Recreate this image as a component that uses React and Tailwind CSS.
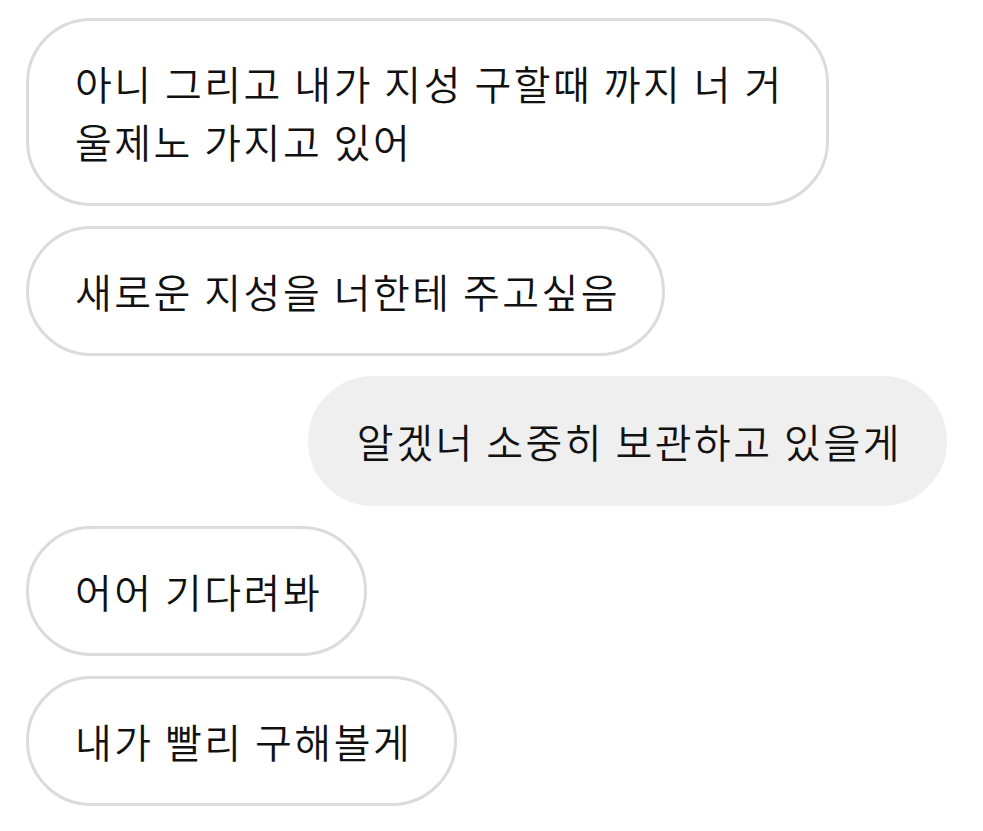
import React from 'react';

const messages = [
  { id: 1, mine: false, text: '아니 그리고 내가 지성 구할때 까지 너 거울제노 가지고 있어' },
  { id: 2, mine: false, text: '새로운 지성을 너한테 주고싶음' },
  { id: 3, mine: true, text: '알겠너 소중히 보관하고 있을게' },
  { id: 4, mine: false, text: '어어 기다려봐' },
  { id: 5, mine: false, text: '내가 빨리 구해볼게' },
];

const Bubble = ({ mine, text }) => (
  <div className={mine ? 'flex justify-end' : 'flex justify-start'}>
    <div
      className={
        mine
          ? 'max-w-[803px] rounded-[65px] bg-[#efefef] border-[3px] border-[#efefef] pl-[46px] pr-[42px] py-[33px] text-[40px] leading-[58px] tracking-[2.5px] font-[350] text-[#111111]'
          : 'max-w-[803px] rounded-[65px] bg-white border-[3px] border-[#dbdbdb] pl-[46px] pr-[42px] py-[33px] text-[40px] leading-[58px] tracking-[2.5px] font-[350] text-[#111111]'
      }
    >
      {text}
    </div>
  </div>
);

const App = () => {
  return (
    <div
      className="min-h-screen bg-white pt-[18px] pl-[26px] pr-[36px] flex flex-col gap-[20px]"
      style={{ fontFamily: '"Noto Sans CJK KR", "Noto Sans", sans-serif' }}
    >
      {messages.map((m) => (
        <Bubble key={m.id} mine={m.mine} text={m.text} />
      ))}
    </div>
  );
};

export default App;
